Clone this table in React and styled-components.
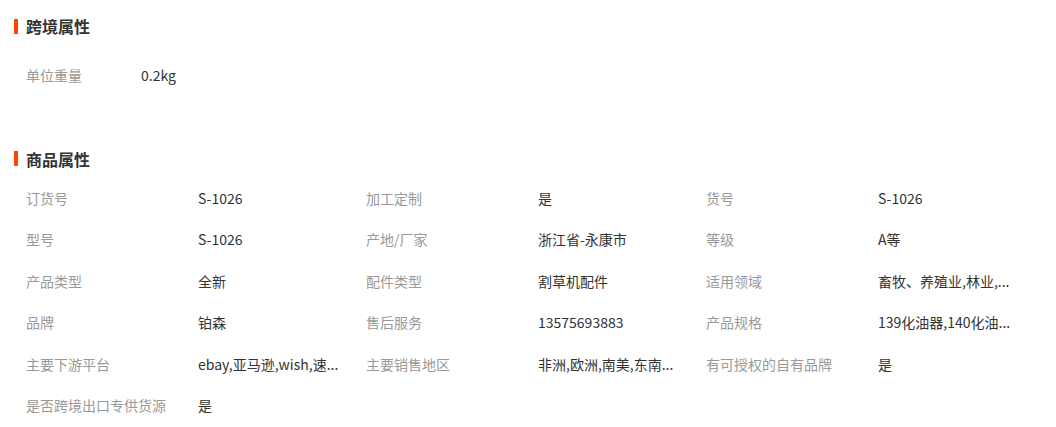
import styled, { createGlobalStyle } from 'styled-components';

const GlobalStyle = createGlobalStyle`
	body {
		margin: 0;
		background: #fff;
		font-family: "Microsoft YaHei", "Noto Sans CJK SC", sans-serif;
	}
`;

const Page = styled.div`
	width: 1056px;
	height: 427px;
	overflow: hidden;
`;

const Section = styled.section`
	padding-top: ${(p) => p.$top}px;
`;

const Title = styled.h3`
	display: flex;
	align-items: center;
	gap: 8px;
	margin: 0 0 0 14px;
	height: 20px;
	font-size: 16px;
	font-weight: bold;
	color: #333;
	line-height: 20px;

	&::before {
		content: '';
		width: 4px;
		height: 15px;
		background: #ff4400;
	}
`;

const AttrGrid = styled.div`
	display: grid;
	grid-template-columns: repeat(3, 340px);
	padding-left: 26px;
	margin-top: ${(p) => p.$gap}px;
`;

const Item = styled.div`
	display: flex;
	align-items: center;
	height: 41.4px;
	font-size: 14px;
`;

const Label = styled.span`
	flex: none;
	width: ${(p) => p.$width || 172}px;
	color: #999;
`;

const Value = styled.span`
	color: #333;
	white-space: nowrap;
`;

// values are shown already shortened, as on the page
const props = [
	['订货号', 'S-1026'],
	['加工定制', '是'],
	['货号', 'S-1026'],
	['型号', 'S-1026'],
	['产地/厂家', '浙江省-永康市'],
	['等级', 'A等'],
	['产品类型', '全新'],
	['配件类型', '割草机配件'],
	['适用领域', '畜牧、养殖业,林业,...'],
	['品牌', '铂森'],
	['售后服务', '13575693883'],
	['产品规格', '139化油器,140化油...'],
	['主要下游平台', 'ebay,亚马逊,wish,速...'],
	['主要销售地区', '非洲,欧洲,南美,东南...'],
	['有可授权的自有品牌', '是'],
	['是否跨境出口专供货源', '是'],
];

export default function App() {
	return (
		<Page>
			<GlobalStyle />
			<Section $top={16}>
				<Title>跨境属性</Title>
				<AttrGrid $gap={18.3}>
					<Item>
						<Label $width={115}>单位重量</Label>
						<Value>0.2kg</Value>
					</Item>
				</AttrGrid>
			</Section>
			<Section $top={53.3}>
				<Title>商品属性</Title>
				<AttrGrid $gap={8.3}>
					{props.map(([k, v]) => (
						<Item key={k}>
							<Label>{k}</Label>
							<Value>{v}</Value>
						</Item>
					))}
				</AttrGrid>
			</Section>
		</Page>
	);
}
